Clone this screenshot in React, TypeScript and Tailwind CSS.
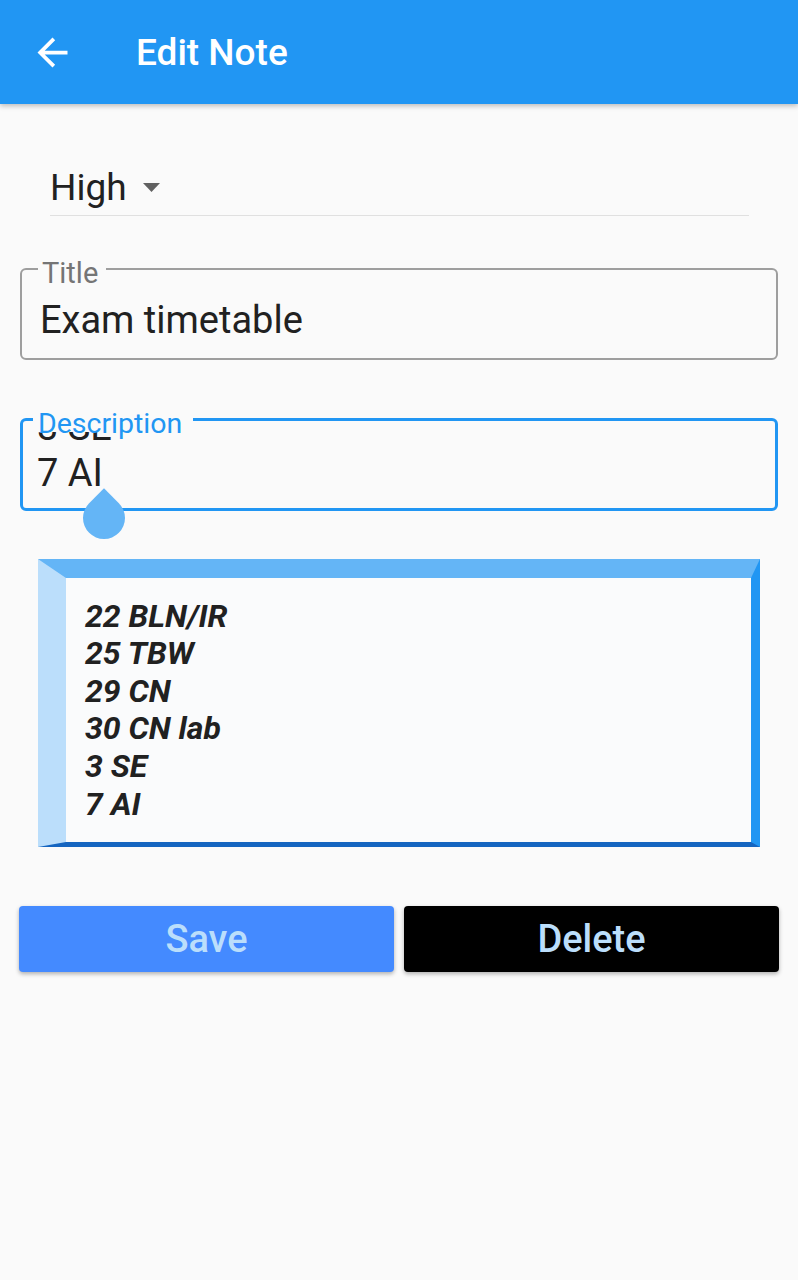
import React from 'react';

const lines = ['22 BLN/IR', '25 TBW', '29 CN', '30 CN lab', '3 SE', '7 AI'];
const descLines = ['22 BLN/IR', '25 TBW', '29 CN', '30 CN lab', '3 SE', '7 AI'];

const BackArrow: React.FC = () => (
  <svg width="45" height="45" viewBox="0 0 24 24" fill="white">
    <path d="M20 11H7.83l5.59-5.59L12 4l-8 8 8 8 1.41-1.41L7.83 13H20v-2z" />
  </svg>
);

const App: React.FC = () => {
  return (
    <div className="min-h-screen w-full bg-[#FAFAFA] font-['Roboto',sans-serif] text-[#212121]">
      {/* App bar */}
      <header className="relative z-10 flex h-[104px] items-center bg-[#2196F3] pl-[30px] shadow-[0_2px_5px_rgba(0,0,0,0.25)]">
        <BackArrow />
        <h1 className="ml-[61px] mt-[2px] text-[37px] font-medium leading-[44px] text-white">Edit Note</h1>
      </header>

      <main className="flex flex-col pt-[62px]">
        {/* Priority dropdown */}
        <div className="ml-[50px] mr-[49px] flex h-[50px] items-start border-b border-[#E0E0E0]">
          <span className="text-[37px] leading-[44px]">High</span>
          <svg className="ml-[16px] mt-[17px]" width="17" height="9" viewBox="0 0 17 9">
            <path d="M0 0h17L8.5 9z" fill="#616161" />
          </svg>
        </div>

        {/* Title field */}
        <div className="relative mx-[20px] mt-[52px] h-[92px] rounded-[6px] border-2 border-[#9E9E9E] pl-[18px] pt-[28px]">
          <span className="absolute left-[16px] top-[-11px] bg-[#FAFAFA] pl-[4px] pr-[8px] text-[29px] leading-[29px] text-[#757575]">
            Title
          </span>
          <div className="text-[38px] leading-[44px]">Exam timetable</div>
        </div>

        {/* Description field */}
        <div className="relative mx-[20px] mt-[58px] h-[93px] rounded-[6px] border-[3px] border-[#2196F3] pl-[14px] pt-[11px]">
          <div className="flex h-[64px] flex-col justify-end overflow-hidden">
            {descLines.map((l) => (
              <div key={l} className="shrink-0 text-[38px] leading-[46px]">
                {l}
              </div>
            ))}
          </div>
          <div className="absolute left-[10px] top-[-3px] h-[3px] w-[160px] bg-[#FAFAFA]" />
          <span className="absolute left-[15px] top-[-11px] text-[28.5px] leading-[28px] text-[#2196F3]">
            Description
          </span>
          <div className="absolute left-[60px] top-[76px] h-[42px] w-[42px] rotate-45 rounded-full rounded-tl-none bg-[#64B5F6]" />
        </div>

        {/* Notes panel */}
        <div className="ml-[38px] mr-[38px] mt-[48px] border-b-[5px] border-l-[28px] border-r-[9px] border-t-[19px] border-b-[#1565C0] border-l-[#BBDEFB] border-r-[#2196F3] border-t-[#64B5F6] bg-[#FAFBFC] pb-[19px] pl-[19px] pt-[19.6px]">
          {lines.map((l) => (
            <div key={l} className="text-[32px] font-bold italic leading-[37.6px] text-[#212121]">
              {l}
            </div>
          ))}
        </div>

        {/* Actions */}
        <div className="mx-[19px] mt-[59px] flex gap-[10px]">
          <button className="flex h-[66px] flex-1 items-center justify-center rounded-[4px] bg-[#448AFF] text-[38px] font-medium text-[#BBDEFB] shadow-[0_2px_4px_rgba(0,0,0,0.3)]">
            Save
          </button>
          <button className="flex h-[66px] flex-1 items-center justify-center rounded-[4px] bg-black text-[38px] font-medium text-[#BBDEFB] shadow-[0_2px_4px_rgba(0,0,0,0.3)]">
            Delete
          </button>
        </div>
      </main>
    </div>
  );
};

export default App;
